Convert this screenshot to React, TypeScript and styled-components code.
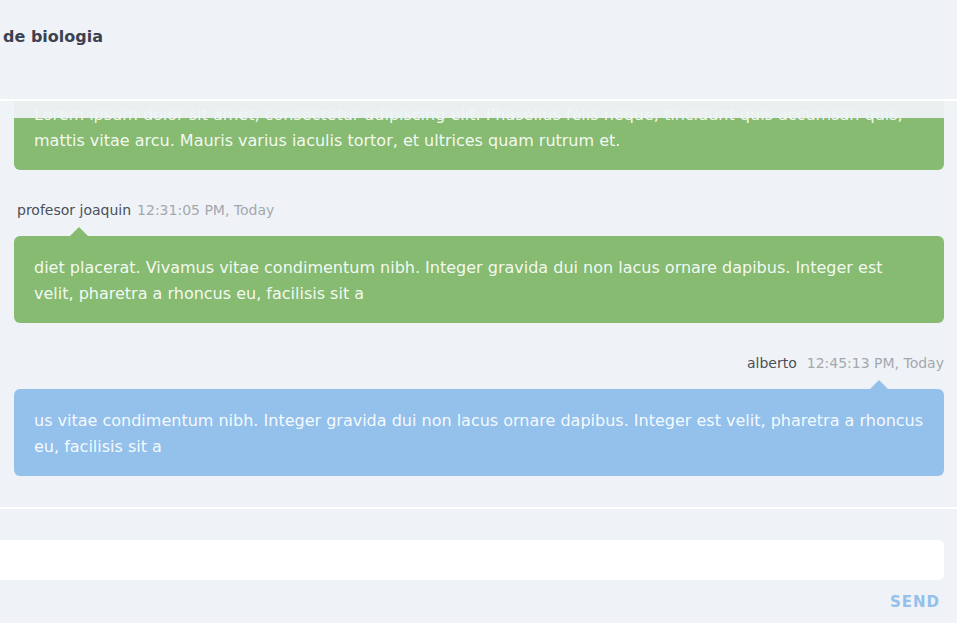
import React from "react";
import styled, { createGlobalStyle } from "styled-components";

const Global = createGlobalStyle`
  html, body { margin: 0; padding: 0; background: #eff3f7; }
  #root { height: 100vh; }
  * { box-sizing: border-box; }
`;

const Page = styled.div`
  height: 100%;
  display: flex;
  flex-direction: column;
  background: #eff3f7;
  font-family: "DejaVu Sans", Verdana, sans-serif;
  overflow: hidden;
`;

const Header = styled.header`
  flex: 0 0 101px;
  padding: 27px 0 0 3px;
  border-bottom: 2px solid #ffffff;
`;

const Title = styled.h1`
  margin: 0;
  font-size: 16px;
  line-height: 20px;
  font-weight: 700;
  color: #3c4250;
  white-space: nowrap;
`;

const MessagesPane = styled.section`
  position: relative;
  flex: 1 1 auto;
  min-height: 0;
  overflow: hidden;
  display: flex;
  flex-direction: column;
  justify-content: flex-end;
  padding: 0 13px 31px 14px;
`;

const TopFade = styled.div`
  position: absolute;
  top: 0;
  left: 0;
  right: 0;
  height: 17px;
  background: rgba(239, 243, 247, 0.94);
  z-index: 2;
`;

const MessageList = styled.div`
  display: flex;
  flex-direction: column;
  gap: 31px;
`;

const Message = styled.div<{ $mine?: boolean }>`
  display: flex;
  flex-direction: column;
  align-items: ${(p) => (p.$mine ? "flex-end" : "flex-start")};
`;

const Meta = styled.div<{ $mine?: boolean }>`
  display: flex;
  align-items: baseline;
  gap: ${(p) => (p.$mine ? "10px" : "6px")};
  height: 18px;
  margin: 0 0 17px ${(p) => (p.$mine ? "0" : "3px")};
  font-size: 14px;
  line-height: 18px;
`;

const Name = styled.span`
  color: #4a4f58;
`;

const Time = styled.span`
  color: #a4a8ae;
`;

const Bubble = styled.div<{ $mine?: boolean }>`
  position: relative;
  align-self: stretch;
  padding: 19px 20px 16px 20px;
  border-radius: 6px;
  background: ${(p) => (p.$mine ? "#93c1ec" : "#86bb71")};
  color: rgba(255, 255, 255, 0.93);
  font-size: 16px;
  line-height: 26px;

  &::before {
    content: "";
    position: absolute;
    top: -9px;
    ${(p) => (p.$mine ? "right: 56px;" : "left: 56px;")}
    border-left: 9px solid transparent;
    border-right: 9px solid transparent;
    border-bottom: 9px solid ${(p) => (p.$mine ? "#93c1ec" : "#86bb71")};
  }
`;

const Footer = styled.footer`
  flex: 0 0 auto;
  border-top: 2px solid #ffffff;
  padding: 31px 13px 0 0;
  display: flex;
  flex-direction: column;
`;

const Input = styled.input`
  height: 40px;
  width: 100%;
  border: none;
  outline: none;
  background: #ffffff;
  border-radius: 0 5px 5px 0;
  padding: 0 14px;
  font-family: inherit;
  font-size: 15px;
`;

const SendRow = styled.div`
  height: 43px;
  display: flex;
  justify-content: flex-end;
  align-items: center;
  padding-right: 4px;
`;

const SendButton = styled.button`
  border: none;
  background: none;
  padding: 0;
  font-family: inherit;
  font-size: 15px;
  font-weight: 700;
  letter-spacing: 1px;
  color: #93c1ec;
  cursor: pointer;
`;

type Msg = { author?: string; time?: string; text: string; mine?: boolean };

const messages: Msg[] = [
  {
    text:
      "Lorem ipsum dolor sit amet, consectetur adipiscing elit. Phasellus felis neque, tincidunt quis accumsan quis, mattis vitae arcu. Mauris varius iaculis tortor, et ultrices quam rutrum et.",
  },
  {
    author: "profesor joaquin",
    time: "12:31:05 PM, Today",
    text:
      "diet placerat. Vivamus vitae condimentum nibh. Integer gravida dui non lacus ornare dapibus. Integer est velit, pharetra a rhoncus eu, facilisis sit a",
  },
  {
    author: "alberto",
    time: "12:45:13 PM, Today",
    mine: true,
    text:
      "us vitae condimentum nibh. Integer gravida dui non lacus ornare dapibus. Integer est velit, pharetra a rhoncus eu, facilisis sit a",
  },
];

export default function App() {
  return (
    <Page>
      <Global />
      <Header>
        <Title>de biologia</Title>
      </Header>
      <MessagesPane>
        <TopFade />
        <MessageList>
          {messages.map((m, i) => (
            <Message key={i} $mine={m.mine}>
              {m.author && (
                <Meta $mine={m.mine}>
                  <Name>{m.author}</Name>
                  <Time>{m.time}</Time>
                </Meta>
              )}
              <Bubble $mine={m.mine}>{m.text}</Bubble>
            </Message>
          ))}
        </MessageList>
      </MessagesPane>
      <Footer>
        <Input type="text" aria-label="message" />
        <SendRow>
          <SendButton>SEND</SendButton>
        </SendRow>
      </Footer>
    </Page>
  );
}
